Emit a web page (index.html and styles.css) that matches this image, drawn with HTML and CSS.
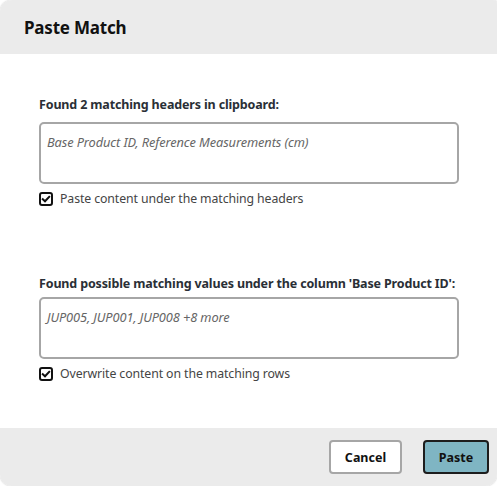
FILE: index.html
```html
<!DOCTYPE html>
<html>
<head>
<meta charset="utf-8">
<link rel="stylesheet" href="styles.css">
</head>
<body>
<div class="dialog">
  <div class="dialog-header">
    <h1 class="dialog-title">Paste Match</h1>
  </div>
  <div class="dialog-body">
    <section class="group group-first">
      <div class="group-label">Found 2 matching headers in clipboard:</div>
      <div class="field"><span class="field-text">Base Product ID, Reference Measurements (cm)</span></div>
      <label class="check-row">
        <span class="check">
          <svg viewBox="0 0 14 14" width="14" height="14"><rect x="1" y="1" width="12" height="12" rx="2" fill="none" stroke="#111" stroke-width="2"/><path d="M3.8 7.2 L6 9.3 L10.2 4.8" fill="none" stroke="#111" stroke-width="2" stroke-linecap="square"/></svg>
        </span>
        <span class="check-text">Paste content under the matching headers</span>
      </label>
    </section>
    <section class="group group-second">
      <div class="group-label">Found possible matching values under the column 'Base Product ID':</div>
      <div class="field"><span class="field-text">JUP005, JUP001, JUP008 +8 more</span></div>
      <label class="check-row">
        <span class="check">
          <svg viewBox="0 0 14 14" width="14" height="14"><rect x="1" y="1" width="12" height="12" rx="2" fill="none" stroke="#111" stroke-width="2"/><path d="M3.8 7.2 L6 9.3 L10.2 4.8" fill="none" stroke="#111" stroke-width="2" stroke-linecap="square"/></svg>
        </span>
        <span class="check-text">Overwrite content on the matching rows</span>
      </label>
    </section>
  </div>
  <div class="dialog-footer">
    <button class="btn btn-cancel">Cancel</button>
    <button class="btn btn-primary">Paste</button>
  </div>
</div>
</body>
</html>
```
FILE: styles.css
```css
html, body {
  margin: 0;
  padding: 0;
  background: #ffffff;
}
body {
  font-family: "Noto Sans", "Open Sans", sans-serif;
  color: #222;
}
.dialog {
  width: 497px;
  height: 486px;
  display: flex;
  flex-direction: column;
  background: #fff;
  border-radius: 12px 4px 12px 12px;
  overflow: hidden;
  box-shadow: 0 0 2px rgba(0,0,0,0.25);
}
.dialog-header {
  height: 54px;
  background: #ebebeb;
  display: flex;
  align-items: center;
  padding-left: 24px;
  flex-shrink: 0;
}
.dialog-title {
  margin: 0;
  font-size: 17px;
  font-weight: 700;
  color: #111;
  letter-spacing: -0.2px;
}
.dialog-body {
  flex: 1;
  padding: 42px 38px 0 39px;
}
.group-label {
  font-size: 12.5px;
  font-weight: 700;
  color: #2a2f36;
  line-height: 17px;
  letter-spacing: -0.15px;
}
.field {
  margin-top: 9px;
  border: 2px solid #a6a6a6;
  border-radius: 5px;
  padding: 6px 6px;
  box-sizing: border-box;
  height: 62px;
}
.field-text {
  font-size: 12.8px;
  font-style: italic;
  color: #666;
  letter-spacing: -0.1px;
}
.check-row {
  display: flex;
  align-items: center;
  gap: 7px;
  margin-top: 6px;
}
.check {
  width: 14px;
  height: 14px;
  display: flex;
}
.check-text {
  font-size: 12.3px;
  color: #444;
  letter-spacing: -0.1px;
}
.group-second {
  margin-top: 68px;
}
.group-second .field {
  margin-top: 5px;
}
.dialog-footer {
  height: 58px;
  background: #ebebeb;
  display: flex;
  align-items: center;
  justify-content: flex-end;
  gap: 21px;
  padding-right: 8px;
  flex-shrink: 0;
}
.btn {
  height: 34px;
  border-radius: 4px;
  font-family: "Noto Sans", sans-serif;
  font-size: 12.5px;
  font-weight: 700;
  cursor: pointer;
  padding: 0;
}
.btn-cancel {
  width: 73px;
  background: #fff;
  border: 2px solid #a6a6a6;
  color: #111;
}
.btn-primary {
  width: 66px;
  background: #7fb5c3;
  border: 2px solid #1d1d1d;
  color: #111;
}
```
